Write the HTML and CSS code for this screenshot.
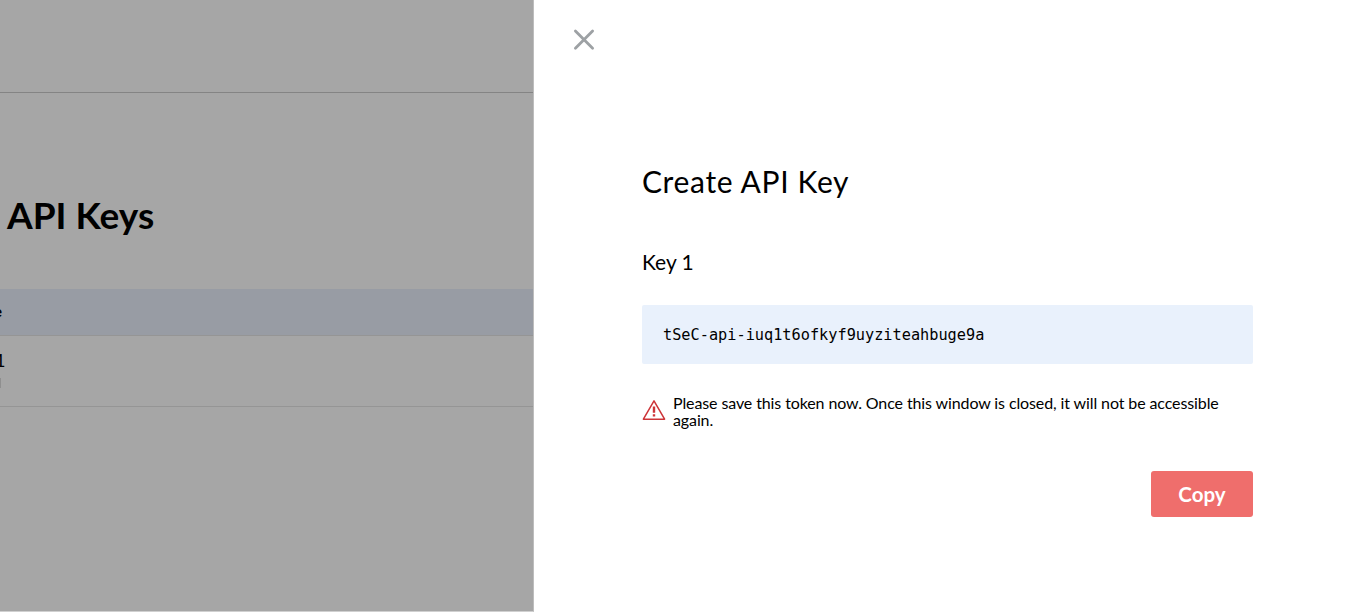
FILE: index.html
```html
<!DOCTYPE html>
<html lang="en">
<head>
<meta charset="utf-8">
<title>API Keys</title>
<link rel="stylesheet" href="styles.css">
</head>
<body>
<div class="app">
  <main class="page">
    <header class="topbar"></header>
    <h1 class="page-title">API Keys</h1>
    <div class="table">
      <div class="table-head">e</div>
      <div class="table-row"><span class="key-name">1</span><span class="key-mark"></span></div>
    </div>
  </main>
  <aside class="drawer">
    <button class="close" aria-label="Close">
      <svg width="22" height="22" viewBox="0 0 22 22"><path d="M2.4 2L19.6 19.2M19.6 2L2.4 19.2"/></svg>
    </button>
    <section class="content">
      <h2 class="title">Create API Key</h2>
      <h3 class="subtitle">Key 1</h3>
      <div class="token">tSeC-api-iuq1t6ofkyf9uyziteahbuge9a</div>
      <div class="warning">
        <svg class="warning-icon" width="24" height="22" viewBox="0 0 24 22">
          <path class="tri" d="M12 1.8L22.6 20.2H1.4Z"/>
          <path class="bang" d="M12 7.6V13.8M12 15.2V17.6"/>
        </svg>
        <p class="warning-text"><span class="line">Please save this token now. Once this window is closed, it will not be accessible</span> <span class="last">again.</span></p>
      </div>
      <button class="copy">Copy</button>
    </section>
  </aside>
</div>
</body>
</html>
```

FILE: styles.css
```css
* { box-sizing: border-box; }
body { margin: 0; background: #fff; color: #000; font-family: Lato, "Open Sans", sans-serif; overflow: hidden; }
h1, h2, h3, p { margin: 0; font-weight: 400; }
button { border: 0; padding: 0; background: none; font: inherit; display: block; }
svg { display: block; }
.app { display: flex; width: 1348px; height: 612px; }
.page { width: 534px; height: 612px; background: #a6a6a6; border-right: 1px solid #bdbdbd; border-bottom: 1px solid #d0d0d0; overflow: hidden; }
.topbar { height: 93px; border-bottom: 1px solid #848484; }
.page-title { margin: 97px 0 0 7px; height: 50px; line-height: 50px; font-size: 37px; font-weight: 700; white-space: nowrap; }
.table { margin-top: 49px; }
.table-head { height: 47px; background: #989ca4; border-bottom: 1px solid #959595; font-size: 15px; font-weight: 700; line-height: 45px; text-indent: -6px; }
.table-row { height: 71px; padding-top: 12px; border-bottom: 1px solid #959595; font-size: 18px; line-height: 24px; text-indent: -5px; }
.key-name { display: block; }
.key-mark { display: block; width: 1px; height: 10px; margin-top: 6px; background: #8f8f8f; }
.drawer { width: 814px; height: 612px; background: #fff; }
.close { margin: 29px 0 0 39px; }
.close path { stroke: #9da1a4; stroke-width: 2.8; stroke-linecap: round; }
.content { margin: 110px 0 0 108px; width: 611px; }
.title { height: 40px; line-height: 40px; font-size: 30px; letter-spacing: 0.65px; white-space: nowrap; }
.subtitle { margin-top: 46px; height: 30px; line-height: 30px; font-size: 21px; }
.token { margin-top: 28px; height: 59px; padding-left: 21px; background: #e9f1fc; border-radius: 2px; font: 15.25px/60px "DejaVu Sans Mono", monospace; white-space: nowrap; }
.warning { display: flex; margin-top: 30px; height: 36px; }
.warning-icon { margin-top: 5px; }
.tri { fill: none; stroke: #cd3438; stroke-width: 1.5; stroke-linejoin: round; }
.bang { stroke: #cd3438; stroke-width: 2.4; }
.warning-text { margin-left: 7px; font-size: 16px; line-height: 17px; letter-spacing: -0.11px; white-space: nowrap; }
.line { display: block; }
.copy { margin: 41px 0 0 auto; width: 102px; height: 46px; border-radius: 3px; background: #ef6e6c; color: #fff; font-size: 20.5px; font-weight: 700; line-height: 46px; text-align: center; }
```
